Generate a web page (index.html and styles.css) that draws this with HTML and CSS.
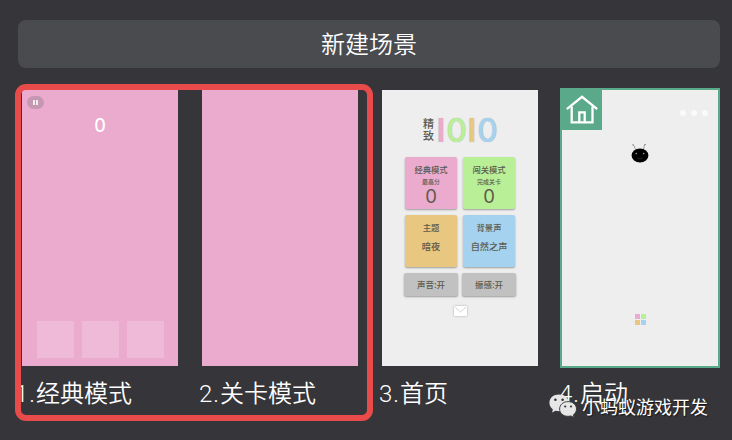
FILE: index.html
```html
<!DOCTYPE html>
<html lang="zh-CN">
<head>
    <meta charset="UTF-8">
    <meta name="viewport" content="width=device-width, initial-scale=1.0">
    <title>场景</title>
    <link rel="stylesheet" href="styles.css">
</head>
<body>
    <div class="panel">
        <button class="new-scene">新建场景</button>

        <div class="scene-list">
            <div class="scene">
                <div class="preview pink game">
                    <div class="pause"><i></i><i></i></div>
                    <div class="score">0</div>
                    <div class="slots"><i></i><i></i><i></i></div>
                </div>
                <div class="scene-name first">1.经典模式</div>
            </div>

            <div class="scene">
                <div class="preview pink"></div>
                <div class="scene-name">2.关卡模式</div>
            </div>

            <div class="scene">
                <div class="preview home">
                    <div class="logo">
                        <div class="logo-text">精<br>致</div>
                        <span class="num one c-pink">I</span>
                        <span class="num zero c-green">0</span>
                        <span class="num one c-yellow">I</span>
                        <span class="num zero c-blue">0</span>
                    </div>
                    <div class="tiles">
                        <div class="tile bg-pink">
                            <div class="t1">经典模式</div>
                            <div class="t2">最高分</div>
                            <div class="t3">0</div>
                        </div>
                        <div class="tile bg-green">
                            <div class="t1">闯关模式</div>
                            <div class="t2">完成关卡</div>
                            <div class="t3">0</div>
                        </div>
                        <div class="tile bg-yellow">
                            <div class="t1">主题</div>
                            <div class="t4">暗夜</div>
                        </div>
                        <div class="tile bg-blue">
                            <div class="t1">背景声</div>
                            <div class="t4">自然之声</div>
                        </div>
                    </div>
                    <div class="switches">
                        <div class="switch">声音:开</div>
                        <div class="switch">振感:开</div>
                    </div>
                    <svg class="mail" width="13" height="10" viewBox="0 0 13 10">
                        <rect x="0" y="0" width="13" height="10" rx="1" fill="#fff"/>
                        <path d="M1 1 L6.5 6 L12 1" fill="none" stroke="#ccc" stroke-width="0.9"/>
                    </svg>
                </div>
                <div class="scene-name">3.首页</div>
            </div>

            <div class="scene">
                <div class="preview start selected">
                    <div class="home-badge">
                        <svg width="32" height="30" viewBox="0 0 32 30" fill="none" stroke="#fff" stroke-width="2.3">
                            <path d="M0.8 14.2 L16 1.8 L31.2 14.2"/>
                            <path d="M5.7 11.5 V27.4 H26.5 V11.5"/>
                            <path d="M13.3 27 V17.4 H18.7 V27"/>
                        </svg>
                    </div>
                    <div class="dots"><i></i><i></i><i></i></div>
                    <svg class="ant" width="18" height="20" viewBox="0 0 18 20">
                        <path d="M4.4 6.5 Q4 3.5 2.2 1.8 M12.6 6.5 Q12.6 3.5 14 1.4" fill="none" stroke="#888" stroke-width="0.8"/>
                        <circle cx="2.1" cy="1.9" r="0.8" fill="#999"/>
                        <circle cx="14" cy="1.5" r="0.8" fill="#888"/>
                        <ellipse cx="9" cy="12.5" rx="8.4" ry="7" fill="#000"/>
                        <circle cx="5.2" cy="10.6" r="0.8" fill="#999"/>
                        <circle cx="12.7" cy="10.6" r="0.8" fill="#999"/>
                        <path d="M6.4 15.3 Q9 16.7 11.6 15.3" fill="none" stroke="#333" stroke-width="0.7"/>
                    </svg>
                    <div class="blocks">
                        <i class="bg-pink"></i><i class="bg-green"></i>
                        <i class="bg-yellow"></i><i class="bg-blue"></i>
                    </div>
                </div>
                <div class="scene-name">4.启动</div>
            </div>
        </div>
    </div>

    <div class="highlight"></div>

    <div class="watermark">
        <svg width="28" height="24" viewBox="0 0 28 24">
            <path d="M10 0.5 C4.4 0.5 0.4 4 0.4 8.8 C0.4 11.5 1.7 13.8 3.9 15.4 L3 18.4 L6.5 16.7 C7.6 17 8.8 17.2 10 17.2 C15.6 17.2 19.7 13.5 19.7 8.8 C19.7 4 15.6 0.5 10 0.5 Z" fill="#e6e6e6"/>
            <path d="M19 7.6 C14.2 7.6 10.6 10.8 10.6 15 C10.6 19.3 14.2 22.3 19 22.3 C20 22.3 21 22.1 21.9 21.9 L25 23.5 L24.3 20.9 C26.2 19.5 27.5 17.4 27.5 15 C27.5 10.8 23.8 7.6 19 7.6 Z" fill="#e6e6e6" stroke="#35353a" stroke-width="0.9"/>
            <g fill="#35353a">
                <circle cx="6.4" cy="5.8" r="1.3"/>
                <circle cx="13.6" cy="5.8" r="1.3"/>
                <circle cx="16.2" cy="12.5" r="1.1"/>
                <circle cx="22" cy="12.5" r="1.1"/>
            </g>
        </svg>
        <span>小蚂蚁游戏开发</span>
    </div>
</body>
</html>
```
FILE: styles.css
```css
* {
    box-sizing: border-box;
}
body {
    margin: 0;
    height: 440px;
    overflow: hidden;
    background: #35353a;
    color: #fff;
    font-family: "Noto Sans CJK SC", sans-serif;
}
i {
    display: block;
}
.panel {
    padding: 20px 12px 0 18px;
}
.new-scene {
    display: block;
    width: 100%;
    height: 48px;
    padding: 0 0 2px;
    border: none;
    border-radius: 8px;
    background: #4a4b4f;
    color: #fff;
    font-family: inherit;
    font-size: 24px;
    font-weight: 350;
    line-height: 46px;
}
.scene-list {
    display: flex;
    gap: 20px;
    padding: 20px 0 0 2px;
}
.scene {
    width: 160px;
}
.preview {
    position: relative;
    height: 280px;
    border: 2px solid transparent;
    background: #eee;
    background-clip: padding-box;
}
.preview.pink {
    background-color: #ebabce;
}
.preview.selected {
    border-color: #5aa98b;
}
.scene-name {
    margin: 8px 0 0 -1px;
    height: 36px;
    line-height: 36px;
    font-family: Roboto, "Noto Sans CJK SC", sans-serif;
    font-size: 24px;
    font-weight: 350;
    white-space: nowrap;
}
.scene-name::first-letter {
    letter-spacing: 1px;
}
.scene-name.first {
    margin-left: -5px;
}

/* 经典模式 */
.game {
    display: flex;
    flex-direction: column;
}
.pause {
    display: flex;
    justify-content: center;
    align-items: center;
    gap: 1px;
    width: 17px;
    height: 13px;
    margin: 6px 0 0 5px;
    border-radius: 7px;
    background: #c597b1;
}
.pause i {
    width: 2px;
    height: 5px;
    background: #eee;
}
.score {
    margin-top: 6px;
    height: 20px;
    line-height: 21px;
    text-align: center;
    font-family: Inter, sans-serif;
    font-size: 18px;
    font-weight: 500;
}
.slots {
    display: flex;
    gap: 8px;
    margin: auto 0 8px 15px;
}
.slots i {
    width: 37px;
    height: 37px;
    background: #efbad7;
}

/* 首页 */
.home {
    display: flex;
    flex-direction: column;
    color: #5d5a4c;
}
.logo {
    display: flex;
    height: 26px;
    margin: 27px 0 0 41px;
}
.logo-text {
    width: 13px;
    font-size: 11px;
    line-height: 12px;
    font-weight: 500;
}
.num {
    display: flex;
    justify-content: center;
    font-family: Inter, sans-serif;
    font-size: 32px;
    line-height: 27px;
    font-weight: 500;
    text-shadow: 0 0 1px #aaa;
}
.num.one {
    width: 10px;
    font-weight: 600;
}
.num.zero {
    width: 21px;
}
.c-pink { color: #ebabce; }
.c-green { color: #b9ef97; }
.c-yellow { color: #e8c880; }
.c-blue { color: #a5d2ef; }
.bg-pink { background: #ebabce; }
.bg-green { background: #b9ef97; }
.bg-yellow { background: #e8c880; }
.bg-blue { background: #a5d2ef; }
.tiles {
    display: grid;
    grid-template-columns: 52px 52px;
    grid-auto-rows: 52px;
    gap: 6px;
    margin: 14px 0 0 23px;
}
.tile,
.switch {
    border-radius: 2px;
    box-shadow: 0 1px 2px rgba(0, 0, 0, 0.35);
    text-align: center;
    white-space: nowrap;
}
.tile {
    padding-top: 7px;
}
.t1 {
    height: 11px;
    font-size: 8.3px;
    line-height: 11px;
    font-weight: 500;
}
.t2 {
    margin-top: 3px;
    height: 8px;
    font-size: 6px;
    line-height: 8px;
    font-weight: 500;
}
.t3 {
    height: 20px;
    font-family: Inter, sans-serif;
    font-size: 18.5px;
    line-height: 21px;
}
.t4 {
    margin-top: 7px;
    height: 12px;
    font-size: 9.2px;
    line-height: 12px;
    font-weight: 500;
}
.switches {
    display: flex;
    gap: 4px;
    margin: 6px 0 0 22px;
}
.switch {
    width: 54px;
    height: 23px;
    background: #c1c1c1;
    font-size: 8.5px;
    line-height: 23px;
    font-weight: 500;
}
.mail {
    margin: 10px 0 0 72px;
    filter: drop-shadow(0 0 1px #aaa);
}

/* 启动 */
.home-badge {
    position: absolute;
    left: 0;
    top: 0;
    display: flex;
    justify-content: center;
    align-items: center;
    width: 40px;
    height: 40px;
    background: #5aa98b;
}
.start {
    display: flex;
    flex-direction: column;
    align-items: center;
}
.dots {
    display: flex;
    align-self: flex-end;
    gap: 5px;
    margin: 20px 10px 0 0;
}
.dots i {
    width: 6px;
    height: 6px;
    border-radius: 50%;
    background: #fafafa;
}
.ant {
    margin-top: 27px;
}
.blocks {
    display: grid;
    grid-template-columns: 5px 5px;
    grid-auto-rows: 5px;
    gap: 1px;
    margin: auto 0 41px;
}

.highlight {
    position: absolute;
    left: 15px;
    top: 84px;
    width: 358px;
    height: 337px;
    border: 6px solid #e84b4a;
    border-radius: 11px;
}
.watermark {
    position: absolute;
    left: 549px;
    top: 394px;
    display: flex;
    gap: 5px;
    height: 26px;
    font-size: 18px;
    line-height: 25px;
    white-space: nowrap;
    text-shadow: 1px 1px 1px rgba(0, 0, 0, 0.6);
}
```
